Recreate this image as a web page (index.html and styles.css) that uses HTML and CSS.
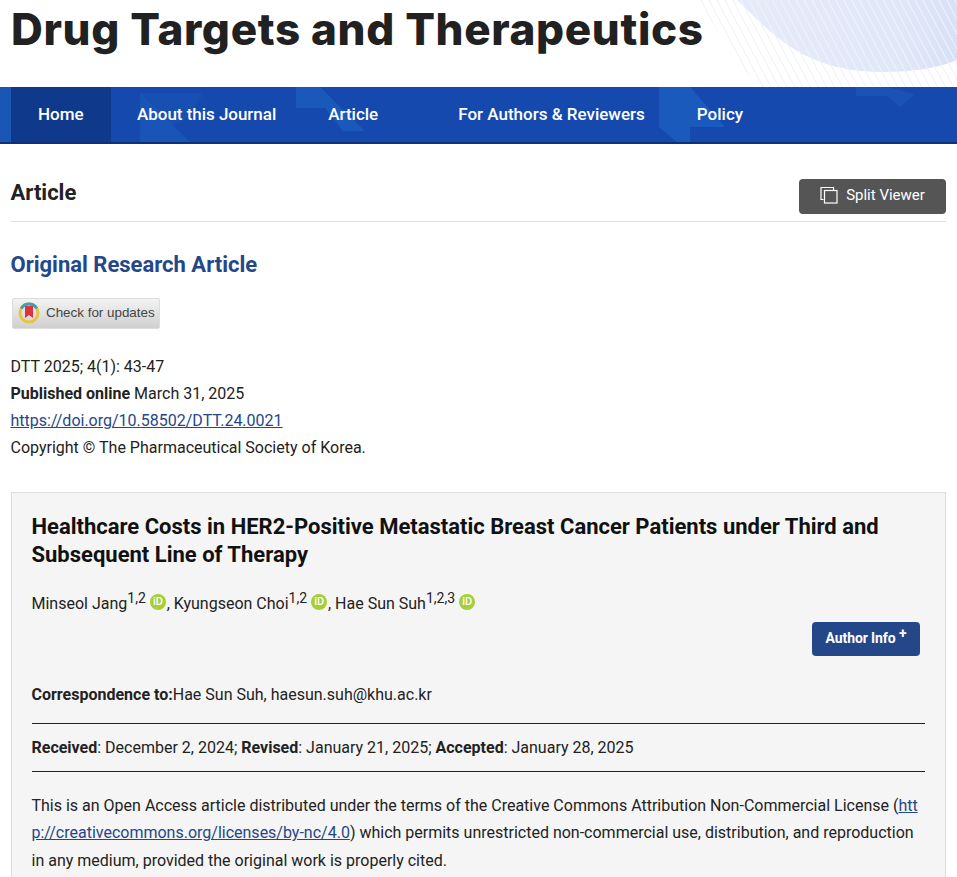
FILE: index.html
```
<!DOCTYPE html>
<html lang="en">
<head>
<meta charset="utf-8">
<title>Drug Targets and Therapeutics</title>
<link rel="stylesheet" href="styles.css">
</head>
<body>
<header class="masthead">
  <svg class="masthead-art" width="260" height="87" viewBox="0 0 260 87" aria-hidden="true">
    <defs>
      <pattern id="hatch" width="7" height="9" patternUnits="userSpaceOnUse" patternTransform="rotate(-28)">
        <line x1="3.500" y1="0" x2="3.500" y2="9" stroke="#eef1f8" stroke-width="1"/>
      </pattern>
      <pattern id="hatch-light" width="7" height="9" patternUnits="userSpaceOnUse" patternTransform="rotate(-28)">
        <line x1="3.500" y1="0" x2="3.500" y2="9" stroke="#eef2fb" stroke-width="1"/>
      </pattern>
      <linearGradient id="blob" x1="0" y1="0" x2="1" y2="0">
        <stop offset="0" stop-color="#e6ebf8"/>
        <stop offset=".75" stop-color="#e0e7f7"/>
        <stop offset="1" stop-color="#d8e1f5"/>
      </linearGradient>
    </defs>
    <path d="M0 0H260V87H60Z" fill="url(#hatch)"/>
    <path d="M40 0C75 34 108 72 186 72C216 72 242 68 260 60V0Z" fill="url(#blob)"/>
    <path d="M40 0C75 34 108 72 186 72C216 72 242 68 260 60V0Z" fill="url(#hatch-light)"/>
  </svg>
  <h1 class="journal-title">Drug Targets and Therapeutics</h1>
</header>
<nav class="mainnav">
  <svg class="nav-art" width="957" height="55" viewBox="0 0 957 55" aria-hidden="true">
    <path d="M0 0H11V55H0Z" fill="#1a56b4"/>
    <path d="M140 6H204L186 32L140 55Z" fill="#184fb2"/>
    <path d="M140 6L190 55H140Z" fill="#1954b7"/>
    <path d="M296 0H320L365 44H343L325 21H296Z" fill="#1a58ba"/>
    <path d="M659 0H690L725 40H690V55H677L659 40Z" fill="#1a5abc"/>
    <path d="M856 0H887L915 7L900 20L887 9H856Z" fill="#1a53b4"/>
  </svg>
  <a class="nav-item nav-active" href="#">Home</a>
  <a class="nav-item nav-about" href="#">About this Journal</a>
  <a class="nav-item nav-article" href="#">Article</a>
  <a class="nav-item nav-authors" href="#">For Authors &amp; Reviewers</a>
  <a class="nav-item" href="#">Policy</a>
</nav>
<main class="content">
  <div class="section-head">
    <h2 class="section-title">Article</h2>
    <button class="split-btn" type="button">
      <svg width="18" height="18" viewBox="0 0 18 18" fill="none" stroke="#fff" stroke-width="1.2" aria-hidden="true">
        <path d="M3.500 13.500H1V1.500H13.500V4"/>
        <rect x="4.500" y="4.500" width="12.500" height="12.500" fill="#555"/>
      </svg>
      Split Viewer
    </button>
  </div>
  <h3 class="article-type">Original Research Article</h3>
  <div class="crossmark">
    <svg width="22" height="22" viewBox="0 0 22 22" aria-hidden="true">
      <circle cx="11" cy="11" r="9" fill="none" stroke="#e8c53f" stroke-width="3"/>
      <path d="M3.200 6.500A9 9 0 0 1 18.800 6.500" fill="none" stroke="#3aa0b8" stroke-width="3"/>
      <path d="M7 4H15V16L11 13L7 16Z" fill="#e0313e"/>
    </svg>
    <span>Check for updates</span>
  </div>
  <div class="meta">
    <div>DTT 2025; 4(1): 43-47</div>
    <div><b>Published online</b> March 31, 2025</div>
    <div><a href="#">https://doi.org/10.58502/DTT.24.0021</a></div>
    <div>Copyright © The Pharmaceutical Society of Korea.</div>
  </div>
  <section class="abstract-box">
    <h1 class="paper-title">Healthcare Costs in HER2-Positive Metastatic Breast Cancer Patients under Third and Subsequent Line of Therapy</h1>
    <p class="authors">Minseol Jang<sup>1,2</sup> <span class="orcid">iD</span>, Kyungseon Choi<sup>1,2</sup> <span class="orcid">iD</span>, Hae Sun Suh<sup>1,2,3</sup> <span class="orcid">iD</span></p>
    <div class="info-row"><button class="info-btn" type="button">Author Info <sup>+</sup></button></div>
    <p class="corr"><b>Correspondence to:</b>Hae Sun Suh, haesun.suh@khu.ac.kr</p>
    <p class="dates"><b>Received</b>: December 2, 2024; <b>Revised</b>: January 21, 2025; <b>Accepted</b>: January 28, 2025</p>
    <p class="license">This is an Open Access article distributed under the terms of the Creative Commons Attribution Non-Commercial License (<a href="#">http://creativecommons.org/licenses/by-nc/4.0</a>) which permits unrestricted non-commercial use, distribution, and reproduction in any medium, provided the original work is properly cited.</p>
  </section>
</main>
</body>
</html>
```
FILE: styles.css
```
* { box-sizing: border-box; }
html, body { margin: 0; padding: 0; height: 877px; overflow: hidden; background: #fff; }
body { font-family: Roboto, "Liberation Sans", sans-serif; font-size: 16px; color: #222; }

.masthead { position: relative; height: 87px; overflow: hidden; padding-left: 11px; }
.masthead-art { position: absolute; right: 0; top: 0; }
.journal-title { position: relative; margin: 0; font-family: Inter, "Open Sans", sans-serif; font-weight: 800; font-size: 44px; line-height: 59px; letter-spacing: 0.65px; color: #212121; }

.mainnav { position: relative; display: flex; height: 57px; padding-left: 11px; background: #1549ae; border-bottom: 2px solid #0d3277; }
.nav-art { position: absolute; left: 0; top: 0; }
.nav-item { position: relative; display: flex; align-items: center; padding: 0 26px 2px 27px; color: #fff; font-weight: 500; font-size: 17px; text-decoration: none; }
.nav-active { background: #0f3a8c; width: 100px; }
.nav-about { padding: 0 25px 2px 26px; letter-spacing: -0.03px; }
.nav-article { padding-right: 80px; }
.nav-authors { padding-right: 25px; padding-left: 0; }

.content { padding: 0 11px; }
.section-head { display: flex; justify-content: space-between; align-items: flex-start; height: 78px; padding-top: 35px; border-bottom: 1px solid #ddd; }
.section-title { margin: 0 0 0 -0.5px; font-size: 22px; font-weight: 700; line-height: 28px; color: #222; }
.split-btn { display: flex; align-items: center; gap: 8px; width: 147px; height: 35px; padding: 0 0 3px; justify-content: center; border: 0; border-radius: 4px; background: #555; color: #fff; font: 400 15px Roboto, sans-serif; }
.article-type { margin: 29px 0 0 -0.5px; font-size: 22px; font-weight: 700; line-height: 28px; color: #24478a; }
.crossmark { display: flex; align-items: center; gap: 6px; width: 148px; height: 31px; margin: 19px 0 0 1px; padding: 0 0 2px 5px; background: linear-gradient(#f3f3f3, #cfcfcf); border: 1px solid #ddd; border-radius: 2px; font-family: "Liberation Sans", sans-serif; font-size: 13.400px; color: #444; }
.meta { margin: 24px 0 0 -0.5px; line-height: 27px; }
.meta a { color: #24478a; }

.abstract-box { margin-top: 31px; padding: 20px 20px 0 19.500px; background: #f5f5f5; border: 1px solid #ddd; height: 400px; }
.paper-title { margin: 0; font-size: 22px; font-weight: 700; line-height: 28px; color: #111; }
.authors { margin: 21px 0 0; line-height: 27px; }
.authors sup { font-size: 14px; line-height: 0; vertical-align: 6px; }
.orcid { display: inline-flex; align-items: center; justify-content: center; width: 16px; height: 16px; margin: 0 0.7px 0 0.2px; border-radius: 50%; background: #a6ce39; color: #fff; font-size: 11px; font-weight: 500; vertical-align: 4px; }
.info-row { display: flex; justify-content: flex-end; padding-right: 5px; margin-top: 5px; }
.info-btn { width: 108px; height: 34px; padding: 0 0 2px; border: 0; border-radius: 4px; background: #24478a; color: #fff; font: 700 14px Roboto, sans-serif; letter-spacing: -0.1px; }
.info-btn sup { font-size: 14px; line-height: 0; vertical-align: 5px; }
.corr { margin: 25px 0 0; line-height: 27px; padding-bottom: 15px; border-bottom: 1px solid #222; }
.dates { margin: 0; padding: 10px 0; line-height: 27px; border-bottom: 1px solid #222; }
.license { margin: 19.700px 0 0; line-height: 27.500px; }
.license a { color: #24478a; word-break: break-all; }
```
